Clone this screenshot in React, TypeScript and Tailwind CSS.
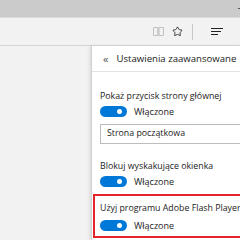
import { Star } from 'lucide-react';

function Toggle() {
    return (
        <div className="flex items-center">
            <div className="relative h-[11px] w-[27px] rounded-full bg-[#0078d7]">
                <div className="absolute right-[5px] top-[3px] h-[5px] w-[5px] rounded-full bg-white"></div>
            </div>
            <span className="ml-[7px] text-[9px] leading-none text-[#222]">Włączone</span>
        </div>
    );
}

export default function App() {
    return (
        <div
            className="flex h-[240px] w-[240px] flex-col overflow-hidden bg-[#f2f2f2]"
            style={{ fontFamily: '"Open Sans", "Noto Sans", sans-serif' }}
        >
            {/* Title bar */}
            <div className="relative h-[18px] shrink-0 border-b border-[#dadada] bg-[#cbcbcb]">
                <div className="absolute right-0 top-[8px] h-px w-[2px] bg-[#555]"></div>
            </div>

            {/* Toolbar */}
            <div className="flex h-[28px] shrink-0 items-center border-b border-[#d6d6d6] bg-[#f2f2f2]">
                <div className="flex-1"></div>
                <svg width="11" height="9" viewBox="0 0 11 9">
                    <path d="M0.5 0.5h4.5v8h-4.5z M6 0.5h4.5v8h-4.5z M5 0.5v8" fill="none" stroke="#c2c2c2" strokeWidth="1" />
                </svg>
                <Star className="ml-[8px] h-[11px] w-[11px] text-[#222]" strokeWidth={1.8} />
                <div className="ml-[9px] h-[16px] w-px bg-[#c8c8c8]"></div>
                <svg width="13" height="8" viewBox="0 0 13 8" className="ml-[18px] mr-[16px]">
                    <path d="M0 0.5h12 M0 3.5h10 M0 6.5h7" stroke="#222" strokeWidth="1" />
                </svg>
            </div>

            {/* Body */}
            <div className="flex flex-1">
                <div className="w-[91px] shrink-0"></div>
                <div className="flex-1 border-l border-[#d0d0d0] bg-white shadow-[-2px_0_3px_rgba(0,0,0,0.08)]">
                    {/* Panel header */}
                    <div className="flex h-[26px] items-center border-b border-[#e3e3e3]">
                        <span className="ml-[11px] text-[11px] leading-none text-[#555]">«</span>
                        <span className="ml-[8px] whitespace-nowrap text-[9.6px] leading-none text-[#222]">Ustawienia zaawansowane</span>
                    </div>

                    <div className="pl-[8px]">
                        <div className="mt-[20px] whitespace-nowrap text-[8.8px] leading-none text-[#222]">Pokaż przycisk strony głównej</div>
                        <div className="mt-[5px]">
                            <Toggle />
                        </div>
                        <div className="mt-[7px] flex h-[20px] items-center border border-[#bcbcbc] pl-[6px] text-[8.8px] text-[#222]">
                            Strona początkowa
                        </div>
                        <div className="mt-[18px] whitespace-nowrap text-[8.8px] leading-none text-[#222]">Blokuj wyskakujące okienka</div>
                        <div className="mt-[5px]">
                            <Toggle />
                        </div>
                    </div>

                    <div className="ml-px mt-[7px] h-[44px] border-2 border-r-0 border-[#e3242b] pl-[5px]">
                        <div className="mt-[8px] whitespace-nowrap text-[8.8px] leading-none text-[#222]">Użyj programu Adobe Flash Player</div>
                        <div className="mt-[8px]">
                            <Toggle />
                        </div>
                    </div>
                </div>
            </div>
        </div>
    );
}
